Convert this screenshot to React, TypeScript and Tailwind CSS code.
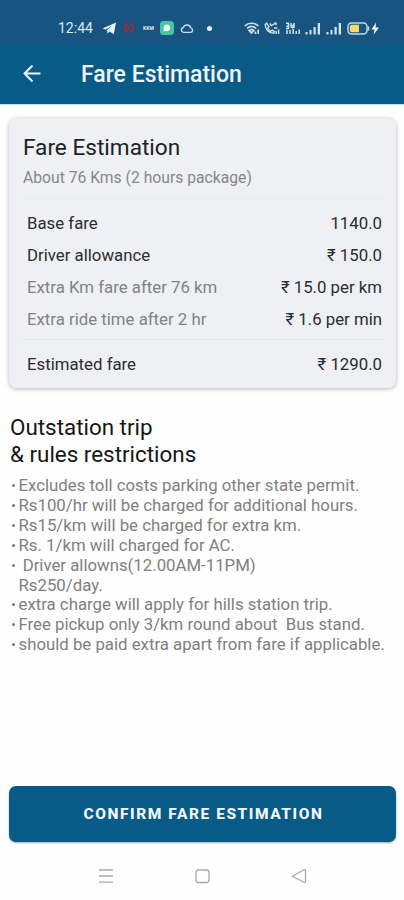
const fares = [
  { label: "Base fare", value: "1140.0", muted: false },
  { label: "Driver allowance", value: "₹ 150.0", muted: false },
  { label: "Extra Km fare after 76 km", value: "₹ 15.0 per km", muted: true },
  { label: "Extra ride time after 2 hr", value: "₹ 1.6 per min", muted: true },
];

const rules = [
  "Excludes toll costs parking other state permit.",
  "Rs100/hr will be charged for additional hours.",
  "Rs15/km will be charged for extra km.",
  "Rs. 1/km will charged for AC.",
  " Driver allowns(12.00AM-11PM)\nRs250/day.",
  "extra charge will apply for hills station trip.",
  "Free pickup only 3/km round about  Bus stand.",
  "should be paid extra apart from fare if applicable.",
];

const Signal = () => (
  <svg width="16" height="13" viewBox="0 0 16 13" fill="#d3e2ec">
    <rect x="0.5" y="10" width="2" height="2.5" />
    <rect x="4.5" y="8" width="2" height="4.5" />
    <rect x="8.5" y="5" width="2.2" height="7.5" />
    <rect x="12.7" y="1" width="2.3" height="11.5" />
  </svg>
);

const StatusBar = () => (
  <div className="flex h-[44px] items-center bg-[#17547f] pt-[12px] pl-[58px]">
    <span className="w-[44px] text-[14px] leading-none text-[#dce9f2]">12:44</span>
    <svg className="shrink-0" width="14" height="13" viewBox="0 0 14 13">
      <path d="M0.5 6.4 14 0.5 11.8 12.3 7.6 9.5 5.6 11.5 5 8.2 10.2 3.6 3.8 7.6Z" fill="#e9f2f7" />
    </svg>
    <svg className="ml-2 shrink-0" width="10" height="10" viewBox="0 0 10 10" fill="none" stroke="#962e45" strokeWidth="2">
      <path d="M4 1.5H1.5v7H4M5.5 1.5h3v7h-3M4.5 4v2.5" />
    </svg>
    <span className="ml-[9px] w-[12px] text-[5px] font-black leading-none text-[#cbdde8]">KKM</span>
    <svg className="ml-[5px] shrink-0" width="14" height="14" viewBox="0 0 14 14">
      <rect width="14" height="14" rx="3.5" fill="#43c6a2" />
      <path d="M7 3.4a3.4 3.4 0 1 1-1.5 6.5L3.4 10.6l.4-2.5A3.4 3.4 0 0 1 7 3.4Z" fill="#f2fffa" />
    </svg>
    <svg className="ml-[6px] shrink-0" width="14" height="11" viewBox="0 0 14 11" fill="none" stroke="#cbdde8" strokeWidth="1.4">
      <path d="M3.5 9.4h7a2.3 2.3 0 0 0 .4-4.5A4 4 0 0 0 3.3 4.5a2.5 2.5 0 0 0 .2 4.9Z" />
    </svg>
    <span className="ml-[13px] size-[5px] shrink-0 rounded-full bg-[#e9f2f7]" />
    <svg className="ml-[32px] shrink-0" width="16" height="13" viewBox="0 0 16 13" fill="none" stroke="#d3e2ec" strokeWidth="1.6">
      <path d="M0.8 4C4.5.4 10.8.4 14.4 4M3.1 6.3c2.8-2.5 6.2-2.5 9 0M5.2 8.5c1.6-1.2 3-1.2 4.6 0L7.5 11Z" />
      <path d="M11.5 12V9.5M14.2 12V7.5" />
    </svg>
    <svg className="ml-1 shrink-0" width="16" height="13" viewBox="0 0 16 13" fill="none" stroke="#d3e2ec" strokeWidth="1.4">
      <path d="M2.6 1.2 1.2 2.6c0 4.8 3.8 8.7 8.5 8.7l1-1.5-2.4-1.7-1.5 1C5.4 8.4 4.4 7.4 3.7 6l1.2-1.4ZM6.5 3.8V1.3M6.8 3.8 11 1.5M10 1.2h2v2M10 6h3.4" />
      <path d="M12.2 12V9M14.6 12V7.5" />
    </svg>
    <svg className="ml-[5px] shrink-0" width="16" height="13" viewBox="0 0 16 13" fill="none" stroke="#d3e2ec" strokeWidth="1.5">
      <path d="M1 1.3h2.5v3H1.3M3.5 4.3v2.3H1M6 1v3l2 2.5M9 1v5M5.8 5.5 9 2.5" />
      <path d="M2 12V8M5 12V8M8.2 12V7M11.2 12V9M14.2 12V7.5" />
    </svg>
    <span className="ml-1 shrink-0"><Signal /></span>
    <span className="ml-[5px] shrink-0"><Signal /></span>
    <svg className="ml-[5px] shrink-0" width="33" height="13" viewBox="0 0 33 13">
      <rect x="1" y="1" width="19" height="11" rx="3.5" fill="none" stroke="#c5d6df" strokeWidth="1.5" />
      <path d="M5 2.8h7v7.4H5a2.2 2.2 0 0 1-2.2-2.2V5A2.2 2.2 0 0 1 5 2.8Z" fill="#f6db6b" />
      <path d="M21.5 4.5v4" stroke="#c5d6df" strokeWidth="1.5" />
      <path d="m29 .5-4.5 7h3l-.8 5L32 5.4h-3.4Z" fill="#f2f7fa" />
    </svg>
  </div>
);

const Header = () => (
  <header className="flex h-[60px] items-center bg-[#085a87] pl-[23px]">
    <svg width="18" height="18" viewBox="0 0 18 18" fill="none" stroke="#eef5f9" strokeWidth="2">
      <path d="M17.5 8.5H1.5M9.5 .5 1.5 8.5l8 8" />
    </svg>
    <h1 className="ml-[40px] text-[23px] font-medium leading-none text-[#eef5f9]">Fare Estimation</h1>
  </header>
);

const FareCard = () => (
  <section className="mr-[8px] ml-[9px] mt-[13px] h-[270px] rounded-[8px] bg-[#eff0f4] px-[14px] pt-[17px] shadow-[0_1px_4px_rgba(0,0,0,0.28)]">
    <h2 className="text-[22.6px] leading-[26px] text-[#202124]">Fare Estimation</h2>
    <p className="mt-[7px] text-[15.7px] leading-[20px] text-[#85878b]">About 76 Kms (2 hours package)</p>
    <div className="mt-[10px] border-t border-[#e9eaee] pt-[9px]">
      {fares.map((fare) => (
        <div key={fare.label} className="flex h-8 items-center justify-between pl-1 text-[16.8px] text-[#2b2c2f]">
          <span className={fare.muted ? "text-[#808286]" : ""}>{fare.label}</span>
          <span>{fare.value}</span>
        </div>
      ))}
    </div>
    <div className="mt-[3px] flex h-[51px] items-center justify-between border-t border-[#e4e5e9] pl-1 text-[16.8px] text-[#2b2c2f]">
      <span>Estimated fare</span>
      <span>₹ 1290.0</span>
    </div>
  </section>
);

const Rules = () => (
  <section className="mt-[26px] px-[10px]">
    <h2 className="text-[22.4px] leading-[27px] text-[#161616]">
      Outstation trip
      <br />& rules restrictions
    </h2>
    <ul className="mt-[8px] text-[16.8px] leading-[19.9px] text-[#808080]">
      {rules.map((rule) => (
        <li key={rule} className="flex">
          <span className="mt-[8px] mr-[4px] ml-[2px] size-[3px] shrink-0 rounded-full bg-[#777777]" />
          <span className="-ml-[0.5px] whitespace-pre">{rule}</span>
        </li>
      ))}
    </ul>
  </section>
);

const NavBar = () => (
  <nav className="flex h-[58px] pt-[26px] pl-[98px]">
    <svg width="212" height="16" viewBox="0 0 212 16" fill="none" stroke="#aaaaaa" strokeWidth="1.3">
      <path d="M1 2h14M1 8h14M1 14.2h14" />
      <rect x="98" y="2" width="13" height="12.5" rx="2.5" />
      <path d="M194.5 8.3 205.5 2Q207.5 1.2 207.5 3v10.5Q207.5 15.2 205.5 14Z" />
    </svg>
  </nav>
);

export default function App() {
  return (
    <div className="flex h-[900px] w-[404px] flex-col overflow-hidden bg-[#fefefe] font-[Roboto,sans-serif]">
      <StatusBar />
      <Header />
      <div className="h-px shrink-0 bg-[#c9dff0]" />
      <FareCard />
      <Rules />
      <div className="mt-auto pr-[8px] pl-[9px]">
        <button className="h-[56px] w-full rounded-[7px] bg-[#085a87] pt-[2px] pl-[2px] text-[15.5px] font-extrabold tracking-[1.55px] text-[#f2f7fa] shadow-[0_1px_2px_rgba(0,0,0,0.35)]">
          CONFIRM FARE ESTIMATION
        </button>
      </div>
      <NavBar />
    </div>
  );
}
